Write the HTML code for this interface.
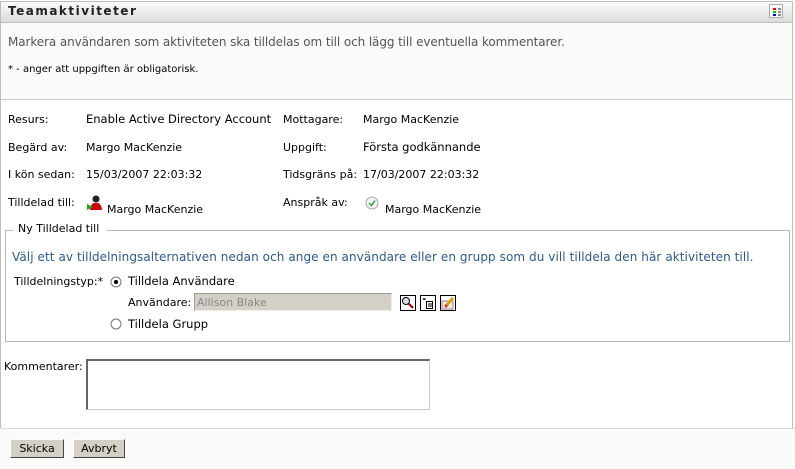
<!DOCTYPE html>
<html><head><meta charset="utf-8"><style>
body{margin:0;width:795px;height:468px;background:#fff;font-family:"DejaVu Sans","Liberation Sans",sans-serif;font-size:11px;color:#000;position:relative;overflow:hidden}
.a{position:absolute;white-space:nowrap}
.l{font-size:11px}
.v{font-size:11.5px}
</style></head><body>
<div class="a" style="left:0;top:1px;width:793px;height:427px;border:1px solid #bdbdbd;border-bottom:none;box-sizing:border-box"></div>
<div class="a" style="left:1px;top:2px;width:791px;height:20px;background:linear-gradient(#fafafa,#dcdddb);border-bottom:1px solid #bdbdbd"></div>
<div class="a" style="left:8px;top:4px;font-weight:bold;font-size:12px;letter-spacing:1.5px;color:#222">Teamaktiviteter</div>
<div class="a" style="left:769px;top:4px;width:14px;height:14px;border:1px solid #aaa;background:#fafafa;box-sizing:border-box">
<div class="a" style="left:3px;top:3px;width:3px;height:2px;background:#f00"></div><div class="a" style="left:8px;top:3px;width:3px;height:2px;background:#888"></div>
<div class="a" style="left:3px;top:6px;width:3px;height:2px;background:#0c0"></div><div class="a" style="left:8px;top:6px;width:3px;height:2px;background:#888"></div>
<div class="a" style="left:3px;top:9px;width:3px;height:2px;background:#00f"></div><div class="a" style="left:8px;top:9px;width:3px;height:2px;background:#888"></div></div>
<div class="a" style="left:1px;top:23px;width:791px;height:76px;background:#fafaf8;border-bottom:1px solid #c8c8c8"></div>
<div class="a" style="left:8px;top:35px;font-size:12px;letter-spacing:-0.1px;color:#555">Markera användaren som aktiviteten ska tilldelas om till och lägg till eventuella kommentarer.</div>
<div class="a" style="left:8px;top:64px;font-size:10px">* - anger att uppgiften är obligatorisk.</div>

<div class="a l" style="left:8px;top:113px">Resurs:</div>
<div class="a v" style="left:86px;top:112px">Enable Active Directory Account</div>
<div class="a l" style="left:283px;top:113px">Mottagare:</div>
<div class="a l" style="left:363px;top:113px">Margo MacKenzie</div>
<div class="a l" style="left:8px;top:141px">Begärd av:</div>
<div class="a l" style="left:86px;top:141px">Margo MacKenzie</div>
<div class="a l" style="left:283px;top:141px">Uppgift:</div>
<div class="a v" style="left:363px;top:140px">Första godkännande</div>
<div class="a l" style="left:8px;top:168px">I kön sedan:</div>
<div class="a l" style="left:86px;top:168px">15/03/2007 22:03:32</div>
<div class="a l" style="left:283px;top:168px">Tidsgräns på:</div>
<div class="a l" style="left:363px;top:168px">17/03/2007 22:03:32</div>
<div class="a l" style="left:8px;top:196px">Tilldelad till:</div>
<svg class="a" style="left:86px;top:195px" width="18" height="16"><circle cx="10" cy="4" r="3.5" fill="#222"/><path d="M4 15 Q5 7 10 8 Q15 7 16 15Z" fill="#c00"/><path d="M1 9 L7 12 L1 15Z" fill="#1a1"/></svg>
<div class="a l" style="left:107px;top:203px">Margo MacKenzie</div>
<div class="a l" style="left:283px;top:196px">Anspråk av:</div>
<svg class="a" style="left:365px;top:196px" width="14" height="14"><circle cx="7" cy="7" r="6" fill="#f4f4f4" stroke="#aaa"/><path d="M4 7 L6.5 9.5 L10 4.5" stroke="#3a3" stroke-width="1.5" fill="none"/></svg>
<div class="a l" style="left:385px;top:203px">Margo MacKenzie</div>

<div class="a" style="left:5px;top:230px;width:785px;height:112px;border:1px solid #b8b8b8;border-top:none;box-sizing:border-box"></div>
<div class="a" style="left:5px;top:230px;width:8px;border-top:1px solid #b8b8b8"></div>
<div class="a" style="left:107px;top:230px;width:683px;border-top:1px solid #b8b8b8"></div>
<div class="a" style="left:18px;top:222px;font-size:11px">Ny Tilldelad till</div>
<div class="a" style="left:12px;top:250px;color:#2b5b8f;font-size:12px;letter-spacing:0.08px">Välj ett av tilldelningsalternativen nedan och ange en användare eller en grupp som du vill tilldela den här aktiviteten till.</div>
<div class="a l" style="left:14px;top:275px">Tilldelningstyp:*</div>
<svg class="a" style="left:110px;top:276px" width="12" height="12"><circle cx="6" cy="6" r="5" fill="#fff" stroke="#777"/><circle cx="6" cy="6" r="2" fill="#000"/></svg>
<div class="a v" style="left:128px;top:274px">Tilldela Användare</div>
<div class="a l" style="left:128px;top:296px">Användare:</div>
<div class="a" style="left:194px;top:293px;width:198px;height:18px;background:#d4d0c8;border:1px solid #999;border-right-color:#eee;border-bottom-color:#eee;box-sizing:border-box;color:#888;font-size:11px;padding:2px 2px">Allison Blake</div>
<svg class="a" style="left:400px;top:295px" width="16" height="16"><rect x=".5" y=".5" width="15" height="15" fill="#fff" stroke="#000"/><circle cx="6" cy="6" r="3.5" fill="#dde" stroke="#000"/><path d="M8.5 8.5 L13 13" stroke="#a00" stroke-width="2"/></svg>
<svg class="a" style="left:420px;top:295px" width="16" height="16"><rect x=".5" y=".5" width="15" height="15" fill="#fff" stroke="#000"/><rect x="6.5" y="6.5" width="6" height="7" fill="#fff" stroke="#000"/><path d="M8 9h4M8 11h4M3 4h3M4 3v2" stroke="#000"/></svg>
<svg class="a" style="left:440px;top:295px" width="16" height="16"><rect x=".5" y=".5" width="15" height="15" fill="#fff" stroke="#000"/><rect x="2" y="6" width="11" height="8" fill="#eee" stroke="#888"/><path d="M6 11 L13 3" stroke="#e8a000" stroke-width="3"/><path d="M5 12 L7 10" stroke="#e33" stroke-width="3"/></svg>
<svg class="a" style="left:110px;top:318px" width="12" height="12"><circle cx="6" cy="6" r="5" fill="#fff" stroke="#777"/></svg>
<div class="a v" style="left:128px;top:317px">Tilldela Grupp</div>

<div class="a l" style="left:4px;top:360px">Kommentarer:</div>
<div class="a" style="left:86px;top:359px;width:344px;height:51px;background:#fff;border:1px solid #ccc;border-top:2px solid #666;border-left:2px solid #666;box-sizing:border-box"></div>

<div class="a" style="left:0;top:428px;width:795px;height:40px;background:#fafaf8;border-top:1px solid #ddd"></div>
<div class="a" style="left:10px;top:439px;width:54px;height:19px;background:#d4d0c8;border:1px solid;border-color:#fff #444 #444 #fff;box-sizing:border-box;text-align:center;font-size:11px;line-height:17px">Skicka</div>
<div class="a" style="left:73px;top:439px;width:52px;height:19px;background:#d4d0c8;border:1px solid;border-color:#fff #444 #444 #fff;box-sizing:border-box;text-align:center;font-size:11px;line-height:17px">Avbryt</div>
</body></html>
